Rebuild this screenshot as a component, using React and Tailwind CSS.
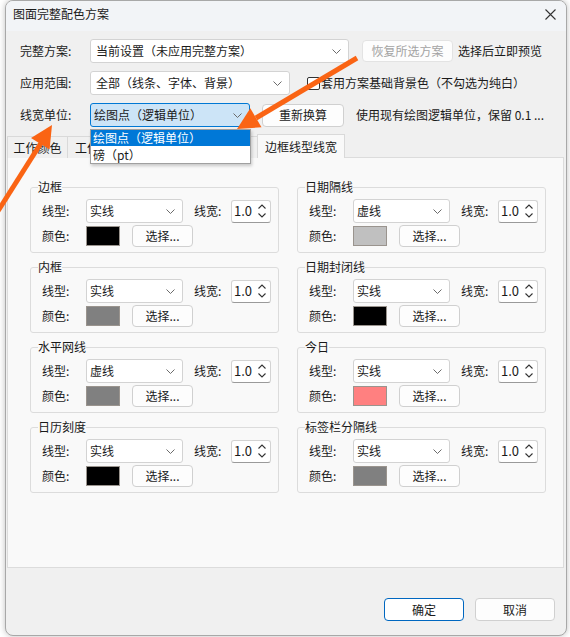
import React from "react";

const groups = [
  { title: "边框", line: "实线", color: "bg-[#000000]" },
  { title: "日期隔线", line: "虚线", color: "bg-[#c0c0c0]" },
  { title: "内框", line: "实线", color: "bg-[#808080]" },
  { title: "日期封闭线", line: "实线", color: "bg-[#000000]" },
  { title: "水平网线", line: "虚线", color: "bg-[#808080]" },
  { title: "今日", line: "实线", color: "bg-[#ff8080]" },
  { title: "日历刻度", line: "实线", color: "bg-[#000000]" },
  { title: "标签栏分隔线", line: "实线", color: "bg-[#808080]" },
];

const Chevron = () => (
  <svg width="9" height="5" viewBox="0 0 9 5" className="shrink-0">
    <path d="M0.5 0.5L4.5 4.5L8.5 0.5" fill="none" stroke="#6b6b6b" strokeWidth="1" />
  </svg>
);

const Combo = ({ text, className = "", focused = false }) => (
  <div
    className={`flex h-[24px] items-center justify-between rounded-[3px] border pr-[7px] ${
      focused ? "border-[#0078d4] bg-[#cce4f7]" : "border-[#d3d3d3] bg-white"
    } ${className}`}
  >
    <span className="whitespace-nowrap">{text}</span>
    <Chevron />
  </div>
);

const Spin = () => (
  <div className="flex h-[23px] w-[40px] items-center justify-between rounded-[3px] border border-[#d3d3d3] border-b-[#9a9a9a] bg-white pl-[2px] pr-[4px]">
    <span className="text-[13px] leading-[16px]">1.0</span>
    <div className="flex flex-col gap-[4px]">
      <svg width="8" height="5" viewBox="0 0 8 5">
        <path d="M0.5 4.5L4 1L7.5 4.5" fill="none" stroke="#333" strokeWidth="1.1" />
      </svg>
      <svg width="8" height="5" viewBox="0 0 8 5">
        <path d="M0.5 0.5L4 4L7.5 0.5" fill="none" stroke="#333" strokeWidth="1.1" />
      </svg>
    </div>
  </div>
);

const Btn = ({ children, className = "" }) => (
  <button
    type="button"
    className={`flex items-center justify-center rounded-[4px] border bg-[#fdfdfd] ${className}`}
  >
    {children}
  </button>
);

const Group = ({ title, line, color }) => (
  <fieldset className="rounded-[3px] border border-[#dcdcdc] px-[7px] pb-[5px]">
    <legend className="px-0 leading-[16px]">{title}</legend>
    <div className="mt-[4px] flex h-[24px] items-center pl-[4px]">
      <span className="w-[44px]">线型:</span>
      <Combo text={line} className="w-[97px] pl-[3px]" />
      <span className="ml-[11px] w-[37px]">线宽:</span>
      <Spin />
    </div>
    <div className="mt-[2px] flex h-[22px] items-center pl-[4px]">
      <span className="w-[44px]">颜色:</span>
      <div className={`h-[20px] w-[34px] border border-[#9a948e] ${color}`} />
      <Btn className="ml-[12px] h-[22px] w-[61px] border-[#d0d0d0]">选择...</Btn>
    </div>
  </fieldset>
);

export default function App() {
  return (
    <div className="relative h-[637px] w-[570px] overflow-hidden bg-white text-[12px] leading-[16px] text-[#1a1a1a] font-['Noto_Sans_CJK_SC',sans-serif]">
      {/* dialog */}
      <div className="ml-[5px] flex h-[636px] w-[562px] flex-col overflow-hidden rounded-[8px] border border-[#a8a8a8] bg-[#f0f0f0] shadow-[0_0_6px_rgba(0,0,0,0.25)]">
        {/* title bar */}
        <div className="flex h-[30px] shrink-0 items-start justify-between bg-[#f2f4f7] pl-[7px] pr-[10px] pt-[4px]">
          <span className="leading-[18px]">图面完整配色方案</span>
          <svg width="11" height="11" viewBox="0 0 11 11" className="mt-[4px]">
            <path d="M0.5 0.5L10.5 10.5M10.5 0.5L0.5 10.5" stroke="#333" strokeWidth="1.1" />
          </svg>
        </div>

        {/* settings rows */}
        <div className="flex flex-col gap-[8px] pl-[14px] pt-[8px]">
          <div className="flex h-[24px] items-center">
            <span className="w-[70px]">完整方案:</span>
            <Combo text="当前设置（未应用完整方案）" className="w-[259px] pl-[5px]" />
            <Btn className="ml-[13px] h-[22px] w-[91px] border-[#e3e3e3] bg-[#f6f6f6] text-[#a3a3a3]">
              恢复所选方案
            </Btn>
            <span className="ml-[5px] whitespace-nowrap">选择后立即预览</span>
          </div>
          <div className="flex h-[24px] items-center">
            <span className="w-[70px]">应用范围:</span>
            <Combo text="全部（线条、字体、背景）" className="w-[200px] pl-[5px]" />
            <div className="ml-[17px] h-[13px] w-[13px] rounded-[2px] border border-[#333] bg-white" />
            <span className="ml-[1px] whitespace-nowrap">套用方案基础背景色（不勾选为纯白）</span>
          </div>
          <div className="flex h-[24px] items-center">
            <span className="w-[70px]">线宽单位:</span>
            <Combo text="绘图点（逻辑单位）" focused className="w-[160px] pl-[3px]" />
            <Btn className="ml-[12px] h-[23px] w-[82px] border-[#d0d0d0]">重新换算</Btn>
            <span className="ml-[12px] whitespace-nowrap">使用现有绘图逻辑单位，保留 0.1 ...</span>
          </div>
        </div>

        {/* tabs */}
        <div className="relative z-10 mt-[8px] flex h-[23px] items-end pl-[1px]">
          <div className="flex h-[22px] w-[61px] items-center justify-center border border-b-0 border-[#d9d9d9] bg-[#f0f0f0]">
            工作颜色
          </div>
          <div className="-ml-px flex h-[22px] w-[88px] items-center justify-center border border-b-0 border-[#d9d9d9] bg-[#f0f0f0]">
            工作时间颜色
          </div>
          <div className="-ml-px flex h-[22px] w-[104px] items-center justify-center border border-b-0 border-[#d9d9d9] bg-[#f0f0f0]">
            甘特条文字字体
          </div>
          <div className="-ml-px flex h-[24px] w-[88px] items-center justify-center border border-b-0 border-[#d9d9d9] bg-[#f9f9f9]">
            边框线型线宽
          </div>
        </div>

        {/* tab panel */}
        <div className="-mt-px ml-[1px] h-[411px] w-[557px] shrink-0 border border-[#dcdcdc] bg-[#f9f9f9] pl-[22px] pt-[21px]">
          <div className="grid grid-cols-[248px_248px] gap-x-[19px] gap-y-[6px]">
            {groups.map((g) => (
              <Group key={g.title} {...g} />
            ))}
          </div>
        </div>

        {/* footer */}
        <div className="flex flex-1 items-start justify-end gap-[11px] pr-[11px] pt-[30px]">
          <Btn className="h-[23px] w-[80px] border-[#0067c0] bg-white">确定</Btn>
          <Btn className="h-[23px] w-[80px] border-[#d0d0d0]">取消</Btn>
        </div>
      </div>

      {/* open dropdown list */}
      <div className="absolute left-[90px] top-[129px] z-20 w-[161px] border border-[#a0a0a0] bg-white shadow-[1px_2px_3px_rgba(0,0,0,0.2)]">
        <div className="h-[16px] bg-[#0078d7] pl-[2px] leading-[16px] text-white">绘图点（逻辑单位）</div>
        <div className="h-[17px] pl-[2px] leading-[17px]">磅（pt）</div>
      </div>

      {/* annotation arrows */}
      <svg className="pointer-events-none absolute inset-0 z-30" width="570" height="637" viewBox="0 0 570 637">
        <line x1="357" y1="58" x2="256" y2="118" stroke="#fa6414" strokeWidth="5" />
        <polygon points="237,129 261.5,127.3 250.3,108.3" fill="#fa6414" />
        <line x1="-2" y1="211" x2="41" y2="143" stroke="#fa6414" strokeWidth="5" />
        <polygon points="52,125 49.6,149.5 31,137.9" fill="#fa6414" />
      </svg>
    </div>
  );
}
